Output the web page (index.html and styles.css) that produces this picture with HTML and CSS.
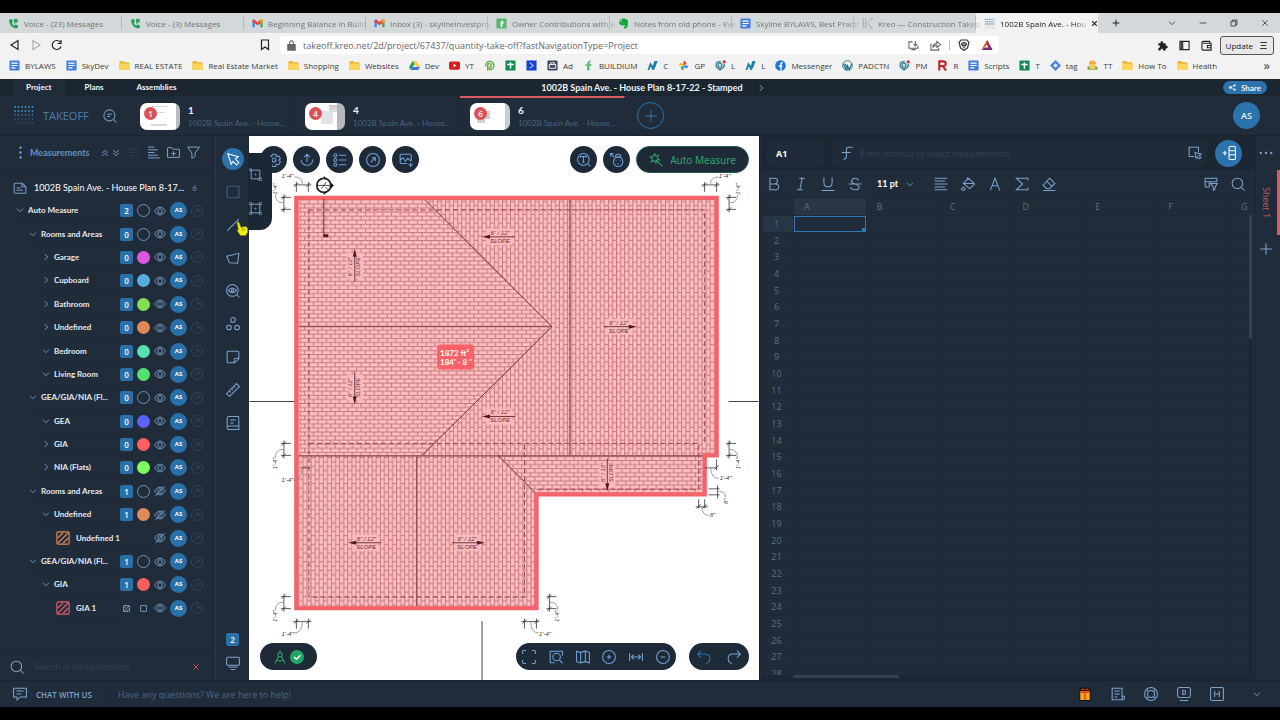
FILE: index.html
```html
<!doctype html>
<html lang="en">

<head>
	<meta charset="utf-8">
	<title>1002B Spain Ave. - House Plan</title>
	<link rel="stylesheet" href="styles.css">
</head>

<body>
	<!-- icon set -->
	<svg class="defs" aria-hidden="true">
		<symbol id="phone" viewBox="0 0 24 24"><path d="M3 3l5-1 3 6-3 3c1 3 3 5 6 6l3-3 5 3-1 5c-10 2-20-8-18-19z" fill="#17a05a" stroke="none"/><path d="M13 2h8v8h-8z" fill="#2f9b57" stroke="none"/><path d="M14 11l-2 4 6-5z" fill="#2f9b57" stroke="none"/></symbol>
		<symbol id="gmail" viewBox="0 0 24 24"><path d="M1 5v15h5V9z" fill="#4285f4" stroke="none"/><path d="M23 5v15h-5V9z" fill="#34a853" stroke="none"/><path d="M1 4l4-1 7 6 7-6 4 1v4l-11 8L1 8z" fill="#ea4335" stroke="none"/><path d="M18 6l5-3v5l-5 4z" fill="#fbbc04" stroke="none"/></symbol>
		<symbol id="buildiumsq" viewBox="0 0 24 24"><rect x="1" y="1" width="22" height="22" rx="2" fill="#5bb56d" stroke="none"/><path d="M17 5c-5 0-7 2-7 6v9h4v-8c3 0 4-1 4-3h-4c0-2 1-3 3-4z" fill="#fff" stroke="none"/></symbol>
		<symbol id="buildium" viewBox="0 0 24 24"><path d="M19 1c-7 0-10 3-10 9v13h5V13c4 0 5-2 5-4h-5c0-4 1-6 5-8zM4 9h4v4H6z" fill="#5bb56d" stroke="none"/></symbol>
		<symbol id="evernote" viewBox="0 0 24 24"><path d="M8 2c5-2 11 0 13 3 2 5 1 12-2 17-3 2-7 1-6-2 0-2 3-2 4-2-1-2-4-1-5-2-5 1-10-2-10-8h6z" fill="#14a83b" stroke="none"/><path d="M2 7l5-5v5z" fill="#14a83b" stroke="none"/></symbol>
		<symbol id="doc" viewBox="0 0 24 24"><rect x="1" y="1" width="22" height="22" rx="2" fill="#3f7de0" stroke="none"/><path d="M5 7h14M5 12h14M5 17h9" stroke="#fff" stroke-width="2.6"/></symbol>
		<symbol id="kreo" viewBox="0 0 24 24"><path d="M3 1v22M8 1v22" stroke="#d9808c" stroke-width="3" stroke-dasharray="3 2"/><path d="M13 9h3M13 14h3M17 4h3M17 19h3M20 1h3M20 22h3" stroke="#97a5b4" stroke-width="3"/></symbol>
		<symbol id="dots" viewBox="0 0 24 24"><path d="M2 3h21M2 8h21M2 13h21" stroke="#7fa7cc" stroke-width="3" stroke-dasharray="3 1"/><path d="M2 18h21M2 22h21" stroke="#b4c9dc" stroke-width="2" stroke-dasharray="2 2"/></symbol>
		<symbol id="folder" viewBox="0 0 24 24"><path d="M1 4q0-2 2-2h7l2 3h9q2 0 2 2v13q0 2-2 2H3q-2 0-2-2z" fill="#e9b93a" stroke="none"/><path d="M1 8h22v12q0 2-2 2H3q-2 0-2-2z" fill="#fbd55c" stroke="none"/></symbol>
		<symbol id="drive" viewBox="0 0 24 24"><path d="M8 2h8L8 16l-4 6-4-7z" fill="#1ea362" stroke="none"/><path d="M8 2h8l8 13h-8z" fill="#ffcf48" stroke="none"/><path d="M8 15h16l-4 7H4z" fill="#3b78e7" stroke="none"/></symbol>
		<symbol id="youtube" viewBox="0 0 24 24"><rect x="0" y="3" width="24" height="18" rx="4" fill="#d91e1e" stroke="none"/><path d="M10 8l6 4-6 4z" fill="#fff" stroke="none"/></symbol>
		<symbol id="pgreen" viewBox="0 0 24 24"><path d="M4 14a9 9 0 1 1 8 7v-5a4 4 0 1 0-4-5v12" stroke="#62a93a" stroke-width="3"/></symbol>
		<symbol id="gsheet" viewBox="0 0 24 24"><rect x="1" y="1" width="22" height="22" rx="1" fill="#118a50" stroke="none"/><path d="M5 10h14M12 5v14" stroke="#fff" stroke-width="3.4"/></symbol>
		<symbol id="bluesq" viewBox="0 0 24 24"><path d="M1 1h22v22H1z" fill="#1443d8" stroke="none"/><path d="M8 6l8 6-8 6" stroke="#fff" stroke-width="2"/></symbol>
		<symbol id="lockbox" viewBox="0 0 24 24"><rect x="1" y="1" width="22" height="22" rx="3" fill="#3b4554" stroke="none"/><path d="M5 10h14v8H5zM8 10V6h8v4" stroke="#fff" stroke-width="2"/></symbol>
		<symbol id="nblue" viewBox="0 0 24 24"><path d="M1 22L7 5l6 8 3 9h-4L8 14l-3 8zM12 16l4-14h7l-6 17z" fill="#1b80a8" stroke="none"/></symbol>
		<symbol id="pinwheel" viewBox="0 0 24 24"><path d="M12 12V1q6 2 6 6t-6 5z" fill="#ea4335" stroke="none"/><path d="M12 12h11q-2 6-6 6t-5-6z" fill="#4285f4" stroke="none"/><path d="M12 12v11q-6-2-6-6t6-5z" fill="#34a853" stroke="none"/><path d="M12 12H1q2-6 6-6t5 6z" fill="#fbbc04" stroke="none"/></symbol>
		<symbol id="pin" viewBox="0 0 24 24"><path d="M13 4C2 2-3 13 11 22c8-6 11-9 9-14M15 9c-8-4-12 2-4 8 4-2 5-4 4-8z" stroke="#26788a" stroke-width="2.6"/><circle cx="20" cy="4" r="3.600" fill="#d8343a" stroke="none"/></symbol>
		<symbol id="facebook" viewBox="0 0 24 24"><circle cx="12" cy="12" r="11.5" fill="#1877d8" stroke="none"/><path d="M17 6h-2q-2 0-2 3v14M8 13h8" stroke="#fff" stroke-width="3"/></symbol>
		<symbol id="wordpress" viewBox="0 0 24 24"><circle cx="12" cy="12" r="10.5" stroke="#2c6f90" stroke-width="2"/><path d="M3 8l6 13 3-9 4 9 5-13M7 8l5 13" stroke="#2c6f90" stroke-width="2.6"/></symbol>
		<symbol id="redr" viewBox="0 0 24 24"><path d="M5 23V3h8q6 0 6 5t-6 5H7M12 13l8 10" stroke="#c0202c" stroke-width="4.4"/></symbol>
		<symbol id="tagblue" viewBox="0 0 24 24"><path d="M12 0l12 12-12 12L0 12z" fill="#4a82e0" stroke="none"/><path d="M12 7l5 5-5 5-5-5z" fill="#e7effc" stroke="none"/></symbol>
		<symbol id="ttface" viewBox="0 0 24 24"><path d="M4 10q0-9 8-9t8 9z" fill="#f1b13c" stroke="none"/><path d="M1 15q11-7 22 0v6H1z" fill="#69b045" stroke="none"/><path d="M6 9h12v11H6z" fill="#f6cb63" stroke="none"/></symbol>

		<symbol id="x" viewBox="0 0 24 24"><path d="M4 4l16 16M20 4L4 20"/></symbol>
		<symbol id="plus" viewBox="0 0 24 24"><path d="M12 2v20M2 12h20"/></symbol>
		<symbol id="down" viewBox="0 0 24 24"><path d="M3 8l9 9 9-9"/></symbol>
		<symbol id="right" viewBox="0 0 24 24"><path d="M8 3l9 9-9 9"/></symbol>
		<symbol id="minus" viewBox="0 0 24 24"><path d="M2 12h20"/></symbol>
		<symbol id="restore" viewBox="0 0 24 24"><path d="M3 7h14v14H3zM7 7V3h14v14h-4"/></symbol>
		<symbol id="back" viewBox="0 0 24 24"><path d="M18 3v18L4 12z"/></symbol>
		<symbol id="fwd" viewBox="0 0 24 24"><path d="M6 3v18l14-9z"/></symbol>
		<symbol id="reload" viewBox="0 0 24 24"><path d="M20 15a9 9 0 1 1-1-8M20 2v7h-7"/></symbol>
		<symbol id="bookmark" viewBox="0 0 24 24"><path d="M5 2h14v19l-7-5-7 5z"/></symbol>
		<symbol id="lock" viewBox="0 0 24 24"><path d="M4 10h16v12H4z" fill="currentColor"/><path d="M8 10V6q0-4 4-4t4 4v4"/></symbol>
		<symbol id="install" viewBox="0 0 24 24"><path d="M10 4H2v14h20v-5M7 21h10M16 2v11M12 9l4 4 4-4"/></symbol>
		<symbol id="share" viewBox="0 0 24 24"><path d="M4 10H2v12h17v-5M6 16c1-6 5-8 9-8V3l8 7-8 6v-4c-4 0-7 1-9 4z"/></symbol>
		<symbol id="brave" viewBox="0 0 24 24"><path d="M6 2h12l4 5-3 11-7 5-7-5L2 7z" fill="#f6f6f6" stroke="#333"/><path d="M7 7l5-1 5 1 1 4-3 4-3 5-3-5-3-4z" fill="#444" stroke="none"/><path d="M9 9l3 2 3-2M10 15l2 1 2-1" stroke="#f6f6f6" stroke-width="1.500"/></symbol>
		<symbol id="bat" viewBox="0 0 24 24"><path d="M12 2l11 20H1l6-5h8l-3-6z" fill="#722c89" stroke="none"/><path d="M12 2L1 22l6-5 5-6z" fill="#e0512c" stroke="none"/><path d="M12 2l11 20-8-5-3-6z" fill="#a02a5a" stroke="none"/></symbol>
		<symbol id="puzzle" viewBox="0 0 24 24"><path d="M3 7h5c-2-6 7-6 5 0h6v5c6-1 6 8 0 6v5h-6c1-5-6-5-5 0H3v-6c5 1 5-6 0-5z" fill="currentColor" stroke="none"/></symbol>
		<symbol id="panel" viewBox="0 0 24 24"><path d="M2 3h20v18H2zM5 3v18M8 3v18"/></symbol>
		<symbol id="wallet" viewBox="0 0 24 24"><path d="M2 5q0-2 3-2h14v4M2 5v14q0 3 3 3h17V7H4M22 12h-8v5h8"/></symbol>
		<symbol id="menu" viewBox="0 0 24 24"><path d="M3 4h18M5 12h14M3 20h18"/></symbol>

		<symbol id="sharenodes" viewBox="0 0 24 24"><path d="M6 12l12-7M6 12l12 7"/><circle cx="5" cy="12" r="4" fill="currentColor"/><circle cx="19" cy="5" r="3" fill="currentColor"/><circle cx="19" cy="19" r="3" fill="currentColor"/></symbol>
		<symbol id="textsearch" viewBox="0 0 24 24"><circle cx="11" cy="11" r="9.5"/><path d="M18 18l5 5M7 9h8M7 13h5"/></symbol>
		<symbol id="search" viewBox="0 0 24 24"><circle cx="11" cy="11" r="9"/><path d="M18 18l5 5"/></symbol>
		<symbol id="more" viewBox="0 0 24 24"><g fill="currentColor" stroke="none"><circle cx="12" cy="3" r="2.2"/><circle cx="12" cy="12" r="2.2"/><circle cx="12" cy="21" r="2.2"/></g></symbol>
		<symbol id="morex" viewBox="0 0 24 24"><g fill="currentColor" stroke="none"><circle cx="3" cy="12" r="2"/><circle cx="12" cy="12" r="2"/><circle cx="21" cy="12" r="2"/></g></symbol>
		<symbol id="dblup" viewBox="0 0 24 24"><path d="M3 12l9-8 9 8M3 21l9-8 9 8"/></symbol>
		<symbol id="dbldown" viewBox="0 0 24 24"><path d="M3 3l9 8 9-8M3 12l9 8 9-8"/></symbol>
		<symbol id="listr" viewBox="0 0 24 24"><path d="M20 2v20M4 6h12M4 12h12M4 18h12"/></symbol>
		<symbol id="listl" viewBox="0 0 24 24"><path d="M2 2h12M2 7h18M2 12h12M2 17h18M2 22h22"/></symbol>
		<symbol id="newfolder" viewBox="0 0 24 24"><path d="M1 4q0-1 1-1h7l2 3h11q1 0 1 1v14H1zM12 10v8M8 14h8"/></symbol>
		<symbol id="filter" viewBox="0 0 24 24"><path d="M1 2h22l-8 11v6l-6 4V13z"/></symbol>
		<symbol id="page" viewBox="0 0 24 24"><path d="M4 4h12l6 6v11H4q-2 0-2-2V6q0-2 2-2zM15 4v6h7M6 12h7M6 16h11"/></symbol>
		<symbol id="eye" viewBox="0 0 24 24"><path d="M1 12q11-16 22 0-11 16-22 0z"/><circle cx="12" cy="12" r="4.5"/></symbol>
		<symbol id="eyeoff" viewBox="0 0 24 24"><path d="M1 12q11-16 22 0-11 16-22 0zM3 22L21 2"/><circle cx="12" cy="12" r="4.5"/></symbol>
		<symbol id="link" viewBox="0 0 24 24"><circle cx="12" cy="12" r="11"/><path d="M8 16l8-8M10 8h6v6"/></symbol>
		<symbol id="hatch" viewBox="0 0 24 24"><rect x="1.5" y="1.5" width="21" height="21" rx="2"/><path d="M3 12l9-9M3 21L21 3M12 21l9-9"/></symbol>
		<symbol id="square" viewBox="0 0 24 24"><rect x="2" y="2" width="20" height="20" rx="1"/></symbol>

		<symbol id="cursor" viewBox="0 0 24 24"><path d="M3 3l18 5-5 4 6 6-4 4-6-6-3 5z"/></symbol>
		<symbol id="line" viewBox="0 0 24 24"><path d="M2 22L22 2"/></symbol>
		<symbol id="poly" viewBox="0 0 24 24"><path d="M1 9l21-5-2 17-14-1z"/></symbol>
		<symbol id="eyesearch" viewBox="0 0 24 24"><circle cx="11" cy="11" r="10"/><path d="M18 18l5 5M4 11q7-8 14 0-7 8-14 0z"/><circle cx="11" cy="11" r="2"/></symbol>
		<symbol id="three" viewBox="0 0 24 24"><circle cx="12" cy="5" r="4"/><circle cx="5" cy="18" r="4"/><circle cx="19" cy="18" r="4"/></symbol>
		<symbol id="sticky" viewBox="0 0 24 24"><path d="M4 2h16q2 0 2 2v11l-7 7H4q-2 0-2-2V4q0-2 2-2zM22 14h-5q-3 0-3 3v5"/></symbol>
		<symbol id="ruler" viewBox="0 0 24 24"><path d="M1 18L18 1l5 5L6 23zM6 14l2 2M10 10l2 2M14 6l2 2"/></symbol>
		<symbol id="book" viewBox="0 0 24 24"><path d="M4 1h17q1 0 1 1v15H4q-2 1-2 3t2 3h18v-6M2 20V4q0-3 2-3M7 7h10M7 12h6"/></symbol>
		<symbol id="screens" viewBox="0 0 24 24"><rect x="1" y="2" width="22" height="14" rx="2"/><path d="M4 19h16M8 23h8"/></symbol>
		<symbol id="boxnode" viewBox="0 0 24 24"><path d="M4 4h16v16H4z"/><circle cx="3" cy="3" r="2"/><circle cx="21" cy="21" r="2.6"/><circle cx="12" cy="12" r="1"/></symbol>
		<symbol id="boxnodes" viewBox="0 0 24 24"><path d="M4 4h16v16H4z"/><circle cx="3" cy="3" r="2.4"/><circle cx="21" cy="3" r="2.4"/><circle cx="3" cy="21" r="2.4"/><circle cx="21" cy="21" r="2.4"/><circle cx="12" cy="12" r="1"/></symbol>

		<symbol id="gear" viewBox="0 0 24 24"><path d="M9 2h6l1 4 4-1 3 5-3 2 3 3-3 5-4-1-1 4H9l-1-4-4 1-3-5 3-3-3-2 3-5 4 1z"/><circle cx="12" cy="12" r="3.4"/></symbol>
		<symbol id="export" viewBox="0 0 24 24"><path d="M12 16V2M7 7l5-5 5 5M2 11a10 10 0 0 0 20 0"/></symbol>
		<symbol id="legend" viewBox="0 0 24 24"><circle cx="4" cy="4" r="2.6"/><circle cx="4" cy="12" r="2.6"/><circle cx="4" cy="20" r="2.6"/><path d="M10 4h13M10 12h13M10 20h13"/></symbol>
		<symbol id="image" viewBox="0 0 24 24"><path d="M14 18H4q-2 0-2-2V4q0-2 2-2h15q2 0 2 2v9M2 12l5-4 4 6 4-5 6 5M20 17v7M16 20h8"/></symbol>
		<symbol id="tsearch" viewBox="0 0 24 24"><circle cx="11" cy="11" r="10"/><path d="M18 18l5 5M6 8V6h10v2M11 6v10M9 16h4"/></symbol>
		<symbol id="bug" viewBox="0 0 24 24"><circle cx="14" cy="15" r="8"/><path d="M10 8q-2-6 4-6t4 6M10 7h8M1 1l6 6M1 6V1h5M10 13l1 1M17 13l1 1M13 18l1 1 1-1"/></symbol>
		<symbol id="wand" viewBox="0 0 24 24"><path d="M10 1l1 4 5-1-2 4 4 4-5 0-1 5-3-4-5 2 2-5-4-3 5-1zM14 14l9 9"/></symbol>
		<symbol id="compass" viewBox="0 0 24 24"><circle cx="12" cy="8" r="3.6"/><path d="M12 1v3M10 11L3 23M14 11l7 12M6 17q6 4 12 0"/></symbol>
		<symbol id="okdot" viewBox="0 0 24 24"><circle cx="12" cy="12" r="12" fill="#23a565" stroke="none"/><path d="M7 12l4 4 7-7" stroke="#fff" stroke-width="2.4"/></symbol>
		<symbol id="full" viewBox="0 0 24 24"><path d="M1 7V3q0-2 2-2h4M17 1h4q2 0 2 2v4M23 17v4q0 2-2 2h-4M7 23H3q-2 0-2-2v-4"/></symbol>
		<symbol id="zoomarea" viewBox="0 0 24 24"><path d="M23 10V2H2v20h8"/><circle cx="13" cy="12" r="6.5"/><path d="M18 17l5 6"/></symbol>
		<symbol id="map" viewBox="0 0 24 24"><path d="M1 2l7 2 8-2 7 2v18l-7-2-8 2-7-2zM8 4v18M16 2v18"/></symbol>
		<symbol id="circplus" viewBox="0 0 24 24"><circle cx="12" cy="12" r="11"/><path d="M12 8v8M8 12h8"/></symbol>
		<symbol id="circminus" viewBox="0 0 24 24"><circle cx="12" cy="12" r="11"/><path d="M8 12h8"/></symbol>
		<symbol id="fitw" viewBox="0 0 24 24"><path d="M1 5v14M23 5v14M5 12h14M8 8l-4 4 4 4M16 8l4 4-4 4"/></symbol>
		<symbol id="undo" viewBox="0 0 24 24"><path d="M7 1L1 7l6 6M1 7h14q7 1 7 8t-7 8"/></symbol>
		<symbol id="redo" viewBox="0 0 24 24"><path d="M17 1l6 6-6 6M23 7H9q-7 1-7 8t7 8"/></symbol>

		<symbol id="func" viewBox="0 0 24 24"><path d="M22 2h-7q-4 0-4 4v12q0 4-5 5M3 11h15"/></symbol>
		<symbol id="pick" viewBox="0 0 24 24"><path d="M11 18H2V2h16v8M12 11l11 3-4 2 3 4-3 2-3-3-2 2z"/></symbol>
		<symbol id="insert" viewBox="0 0 24 24"><rect x="12" y="1" width="11" height="22" rx="2"/><path d="M12 8h11M12 15h11M1 12h7M5 8v8"/></symbol>
		<symbol id="bold" viewBox="0 0 24 24"><path d="M5 2h8q5 0 5 5t-5 5H5zM5 12h9q6 0 6 5t-6 5H5z"/></symbol>
		<symbol id="italic" viewBox="0 0 24 24"><path d="M9 2h10M5 22h10M14 2l-4 20"/></symbol>
		<symbol id="under" viewBox="0 0 24 24"><path d="M5 1v9q0 7 7 7t7-7V1M1 23h22"/></symbol>
		<symbol id="strike" viewBox="0 0 24 24"><path d="M18 6q-1-4-6-4T6 7q0 3 6 5 7 2 7 6t-7 4-7-5M1 12h22"/></symbol>
		<symbol id="align" viewBox="0 0 24 24"><path d="M1 2h22M1 7h18M1 12h22M1 17h18M1 22h22"/></symbol>
		<symbol id="bucket" viewBox="0 0 24 24"><path d="M13 2l10 10-8 8-11-9 9-9M4 11h17M10 1l3 4"/><path d="M1 21q3-7 6 0-3 4-6 0z"/></symbol>
		<symbol id="textcol" viewBox="0 0 24 24"><path d="M4 23l8-21 8 21M7 15h10"/></symbol>
		<symbol id="sum" viewBox="0 0 24 24"><path d="M22 6V2H2l11 10L2 22h20v-4"/></symbol>
		<symbol id="erase" viewBox="0 0 24 24"><path d="M13 2l9 9-9 9H8l-6-6zM8 7l9 9M2 23h21"/></symbol>
		<symbol id="tfilter" viewBox="0 0 24 24"><path d="M10 17H2V2h20v6M2 8h20M9 8v9M11 11h12l-4 6v4l-3 2v-6z"/></symbol>

		<symbol id="chat" viewBox="0 0 24 24"><path d="M1 2h22v15H13l-6 5v-5H1zM6 7h12M6 12h8"/></symbol>
		<symbol id="gift" viewBox="0 0 24 24"><path d="M4 4l5-3 3 3 3-3 5 3v5H4z" fill="#d63a1c" stroke="#180d05"/><path d="M3 6h18v17H3z" fill="#f5a91c" stroke="#180d05"/><path d="M12 6v16M4 9h16" stroke="#d63a1c" stroke-width="2.4"/></symbol>
		<symbol id="news" viewBox="0 0 24 24"><path d="M19 16V2H2v20h18q3 0 3-3v-3h-4v6M6 7h9M6 12h9M6 17h5"/></symbol>
		<symbol id="ring" viewBox="0 0 24 24"><circle cx="12" cy="12" r="11"/><circle cx="12" cy="12" r="6"/><path d="M4 4l4 4M20 4l-4 4M4 20l4-4M20 20l-4-4"/></symbol>
		<symbol id="video" viewBox="0 0 24 24"><rect x="1" y="1" width="22" height="17" rx="3"/><path d="M5 23h14M10 6h2q3 0 3 3.500t-3 3.500h-2z"/></symbol>
		<symbol id="hbox" viewBox="0 0 24 24"><rect x="1" y="1" width="22" height="22" rx="2"/><path d="M8 7v10M16 7v10M8 12h8"/></symbol>
	</svg>

	<div class="screen">
		<header class="browser">
			<div class="tabstrip">
				<div class="tab"><svg><use href="#phone"/></svg><span>Voice - (23) Messages</span></div>
				<div class="tab"><svg><use href="#phone"/></svg><span>Voice - (3) Messages</span></div>
				<div class="tab"><svg><use href="#gmail"/></svg><span>Beginning Balance in Build</span></div>
				<div class="tab"><svg><use href="#gmail"/></svg><span>Inbox (3) - skylineinvestpro</span></div>
				<div class="tab"><svg><use href="#buildiumsq"/></svg><span>Owner Contributions with e</span></div>
				<div class="tab"><svg><use href="#evernote"/></svg><span>Notes from old phone - Eve</span></div>
				<div class="tab"><svg><use href="#doc"/></svg><span>Skyline BYLAWS, Best Practi</span></div>
				<div class="tab"><svg><use href="#kreo"/></svg><span>Kreo — Construction Takeo</span></div>
				<div class="tab active"><svg><use href="#dots"/></svg><span>1002B Spain Ave. - Hou</span><button aria-label="Close tab"><svg><use href="#x"/></svg></button></div>
				<button class="newtab" aria-label="New tab"><svg><use href="#plus"/></svg></button>
				<div class="winbuttons">
					<button aria-label="Search tabs"><svg><use href="#down"/></svg></button>
					<button aria-label="Minimize"><svg><use href="#minus"/></svg></button>
					<button aria-label="Restore"><svg><use href="#restore"/></svg></button>
					<button aria-label="Close"><svg><use href="#x"/></svg></button>
				</div>
			</div>
			<div class="navbar">
				<button aria-label="Back"><svg><use href="#back"/></svg></button>
				<button aria-label="Forward" class="off"><svg><use href="#fwd"/></svg></button>
				<button aria-label="Reload"><svg><use href="#reload"/></svg></button>
				<button aria-label="Bookmark" class="mark"><svg><use href="#bookmark"/></svg></button>
				<div class="urlbox">
					<svg><use href="#lock"/></svg>
					<input type="text" aria-label="Address" value="takeoff.kreo.net/2d/project/67437/quantity-take-off?fastNavigationType=Project">
					<svg><use href="#install"/></svg>
					<svg><use href="#share"/></svg>
					<i></i>
					<svg class="big"><use href="#brave"/></svg>
					<svg class="big"><use href="#bat"/></svg>
				</div>
				<div class="navright">
					<button aria-label="Extensions"><svg><use href="#puzzle"/></svg></button>
					<button aria-label="Sidebar"><svg><use href="#panel"/></svg></button>
					<button aria-label="Wallet"><svg><use href="#wallet"/></svg></button>
					<button class="update">Update <svg><use href="#menu"/></svg></button>
				</div>
			</div>
			<nav class="bookmarks">
				<a href="#"><svg><use href="#doc"/></svg>BYLAWS</a>
				<a href="#"><svg><use href="#doc"/></svg>SkyDev</a>
				<a href="#"><svg><use href="#folder"/></svg>REAL ESTATE</a>
				<a href="#"><svg><use href="#folder"/></svg>Real Estate Market</a>
				<a href="#"><svg><use href="#folder"/></svg>Shopping</a>
				<a href="#"><svg><use href="#folder"/></svg>Websites</a>
				<a href="#"><svg><use href="#drive"/></svg>Dev</a>
				<a href="#"><svg><use href="#youtube"/></svg>YT</a>
				<a href="#" aria-label="P"><svg><use href="#pgreen"/></svg></a>
				<a href="#" aria-label="Sheets"><svg><use href="#gsheet"/></svg></a>
				<a href="#" aria-label="Campaigns"><svg><use href="#bluesq"/></svg></a>
				<a href="#"><svg><use href="#lockbox"/></svg>Ad</a>
				<a href="#"><svg><use href="#buildium"/></svg>BUILDIUM</a>
				<a href="#"><svg><use href="#nblue"/></svg>C</a>
				<a href="#"><svg><use href="#pinwheel"/></svg>GP</a>
				<a href="#"><svg><use href="#pin"/></svg>L</a>
				<a href="#"><svg><use href="#nblue"/></svg>L</a>
				<a href="#"><svg><use href="#facebook"/></svg>Messenger</a>
				<a href="#"><svg><use href="#wordpress"/></svg>PADCTN</a>
				<a href="#"><svg><use href="#pin"/></svg>PM</a>
				<a href="#"><svg><use href="#redr"/></svg>R</a>
				<a href="#"><svg><use href="#doc"/></svg>Scripts</a>
				<a href="#"><svg><use href="#gsheet"/></svg>T</a>
				<a href="#"><svg><use href="#tagblue"/></svg>tag</a>
				<a href="#"><svg><use href="#ttface"/></svg>TT</a>
				<a href="#"><svg><use href="#folder"/></svg>How To</a>
				<a href="#"><svg><use href="#folder"/></svg>Health</a>
				<button aria-label="More bookmarks">»</button>
			</nav>
		</header>

		<div class="menubar">
			<nav>
				<a href="#" class="current">Project</a>
				<a href="#">Plans</a>
				<a href="#">Assemblies</a>
			</nav>
			<h1>1002B Spain Ave. - House Plan 8-17-22 - Stamped <button aria-label="Next"><svg><use href="#right"/></svg></button></h1>
			<div class="menuend"><button class="share"><svg><use href="#sharenodes"/></svg>Share</button></div>
		</div>

		<div class="pages">
			<div class="brand">
				<svg class="logo" viewBox="0 0 20 20"><g stroke="#3f8cc6" stroke-linecap="round"><path d="M1 1h19" stroke-width="2" stroke-dasharray="0 3.500"/><path d="M1 5h19" stroke-width="1.800" stroke-dasharray="0 3.500"/><path d="M1 9h19" stroke-width="1.500" stroke-dasharray="0 3.500"/><path d="M1 13h19" stroke-width="1.200" stroke-dasharray="0 3.500"/><path d="M4.500 17h15" stroke-width="1" stroke-dasharray="0 3.500"/></g></svg>
				<span>TAKEOFF</span>
				<button aria-label="Find"><svg><use href="#textsearch"/></svg></button>
			</div>
			<a href="#" class="page"><i class="thumb t1"><b>1</b></i><span><strong>1</strong><small>1002B Spain Ave. - House...</small></span></a>
			<a href="#" class="page"><i class="thumb t4"><b>4</b></i><span><strong>4</strong><small>1002B Spain Ave. - House...</small></span></a>
			<a href="#" class="page open"><i class="thumb t6"><b>6</b></i><span><strong>6</strong><small>1002B Spain Ave. - House...</small></span></a>
			<button class="addpage" aria-label="Add page"><svg><use href="#plus"/></svg></button>
			<button class="avatar">AS</button>
		</div>

		<main>
			<aside class="measures">
				<div class="mhead">
					<svg><use href="#more"/></svg>
					<h2>Measurements</h2>
					<button aria-label="Collapse all"><svg class="sm"><use href="#dblup"/></svg></button>
					<button aria-label="Expand all"><svg class="sm"><use href="#dbldown"/></svg></button>
					<button aria-label="Align right" class="off"><svg><use href="#listr"/></svg></button>
					<button aria-label="Sort"><svg><use href="#listl"/></svg></button>
					<button aria-label="New folder"><svg><use href="#newfolder"/></svg></button>
					<button aria-label="Filter"><svg><use href="#filter"/></svg></button>
				</div>
				<div class="plan"><svg><use href="#page"/></svg><span>1002B Spain Ave. - House Plan 8-17...</span><em>6</em></div>
				<ul id="tree"></ul>
				<form class="msearch">
					<label for="q" aria-label="Search"><svg><use href="#search"/></svg></label>
					<input id="q" type="text" placeholder="Search in measurements">
					<button type="reset" aria-label="Clear"><svg><use href="#x"/></svg></button>
				</form>
			</aside>

			<div class="rail">
				<button class="on" aria-label="Select"><svg><use href="#cursor"/></svg></button>
				<button class="dim" aria-label="Rectangle"><svg><use href="#square"/></svg></button>
				<button aria-label="Line"><svg><use href="#line"/></svg></button>
				<button aria-label="Polygon"><svg><use href="#poly"/></svg></button>
				<button aria-label="Find similar"><svg><use href="#eyesearch"/></svg></button>
				<button aria-label="Count"><svg><use href="#three"/></svg></button>
				<button aria-label="Note"><svg><use href="#sticky"/></svg></button>
				<button aria-label="Ruler"><svg><use href="#ruler"/></svg></button>
				<button aria-label="Guide"><svg><use href="#book"/></svg></button>
				<span class="count">2</span>
				<button class="last" aria-label="Views"><svg><use href="#screens"/></svg></button>
				<div class="flyout">
					<button aria-label="Two point rectangle"><svg><use href="#boxnode"/></svg></button>
					<button aria-label="Four point rectangle"><svg><use href="#boxnodes"/></svg></button>
				</div>
				<svg class="hand" viewBox="0 0 24 30"><path d="M2 3q2-3 4 0l4 10 8-2q4 0 5 4v8l-4 6H9l-6-9q-2-4 2-2z" fill="#f4f000" stroke="#8c8a10" stroke-width="1"/><path d="M12 15l1 5M16 14l1 5" stroke="#8c8a10"/></svg>
			</div>

			<section class="canvas">
				<svg class="drawing" viewBox="249 136 510 545" preserveAspectRatio="xMidYMid meet">
					<defs>
						<pattern id="rows" patternUnits="userSpaceOnUse" x="298" y="199.500" width="8.700" height="8.160">
							<path d="M0 .5h8.700M0 4.580h8.700M2 .5v4.080M6.350 4.580v4.080" stroke="#b0646a" stroke-width=".75"/>
						</pattern>
						<pattern id="cols" patternUnits="userSpaceOnUse" x="298" y="199.500" width="8.160" height="8.700">
							<path d="M.5 0v8.700M4.580 0v8.700M.5 2h4.080M4.580 6.350h4.080" stroke="#b0646a" stroke-width=".75"/>
						</pattern>
						<g id="dimh"><path d="M0-3v10M12-3v10M-3 0h18M-2 2l4-4M10 2l4-4"/></g>
						<g id="dimv"><path d="M-3 0h10M-3 12h10M0-3v18M-2 2l4-4M-2 14l4-4"/></g>
						<g id="slope">
							<path d="M-13-8h26v16h-26z" fill="#fbb9bb"/>
							<path d="M-16 0h26" stroke="#4a1a20" stroke-width=".8"/>
							<path d="M9-2l8 2-8 2z" fill="#4a1a20"/>
						</g>
					</defs>
					<path class="sheetline" d="M249 402h46M729 402h30M482 622v60"/>
					<path d="M296 198h421v258h-12v39H536.500v114H296z" fill="#ffbdbf"/>
					<path d="M298 199.500h126l128 127.500-130 129H298z" fill="url(#rows)"/>
					<path d="M498 456h205v37H536z" fill="url(#rows)"/>
					<path d="M424 199.500h291V456H422l130-129zM298 456h200l38 38v113H298z" fill="url(#cols)"/>
					<path class="edge" d="M424 199l128 128-130 129M498 456l39 39M298 456.500h407"/>
					<path class="ridge" d="M570 199v257M416.500 456v152M298 327h253"/>
					<path class="dash" d="M308.500 210H705V444M308.500 210V598H524.500V444M308.500 444H699V490H536"/>
					<path d="M296 198h421v258h-12v39H536.500v114H296z" fill="none" stroke="#f4626a" stroke-width="4.400"/>

					<g class="mark">
						<path d="M323.500 199v37" stroke="#3a1418" stroke-width=".8"/>
						<path d="M323 234.500h5v3h-5z" fill="#4a1a20"/>
						<path d="M323.500 176l10 9.500-10 9.500z" fill="#000"/>
						<circle cx="323.500" cy="185.500" r="7" fill="#fff" stroke="#222"/>
						<path d="M316.500 185.500h14M321 189l5-7M325 187l3 3" stroke="#222" stroke-width=".8"/>
					</g>

					<g class="slopes">
						<use href="#slope" transform="translate(499 237) rotate(180)"/>
						<use href="#slope" transform="translate(620 327)"/>
						<use href="#slope" transform="translate(354.500 266) rotate(-90)"/>
						<use href="#slope" transform="translate(354.500 388) rotate(90)"/>
						<use href="#slope" transform="translate(499 417) rotate(180)"/>
						<use href="#slope" transform="translate(607.500 475) rotate(90)"/>
						<use href="#slope" transform="translate(365 543.500) rotate(180)"/>
						<use href="#slope" transform="translate(468 543.500)"/>
						<text x="500" y="235">6" / 12"</text><text x="500" y="243">SLOPE</text>
						<text x="619" y="325">6" / 12"</text><text x="619" y="333">SLOPE</text>
						<text x="500" y="415">6" / 12"</text><text x="500" y="423">SLOPE</text>
						<text x="366" y="542">6" / 12"</text><text x="366" y="550">SLOPE</text>
						<text x="467" y="542">6" / 12"</text><text x="467" y="550">SLOPE</text>
						<text transform="translate(352 267) rotate(-90)">6" / 12"</text><text transform="translate(360 267) rotate(-90)">SLOPE</text>
						<text transform="translate(352 388) rotate(-90)">6" / 12"</text><text transform="translate(360 388) rotate(-90)">SLOPE</text>
						<text transform="translate(605 473) rotate(-90)">6" / 12"</text><text transform="translate(613 473) rotate(-90)">SLOPE</text>
					</g>

					<g class="dims">
						<use href="#dimh" x="296" y="185"/><use href="#dimh" x="705" y="185"/>
						<use href="#dimh" x="296" y="622.500"/><use href="#dimh" x="524.500" y="622.500"/>
						<use href="#dimv" x="283.500" y="197.500"/><use href="#dimv" x="729.500" y="197.500"/>
						<use href="#dimv" x="283.500" y="444"/><use href="#dimv" x="729.500" y="444"/>
						<use href="#dimv" x="283.500" y="597.500"/><use href="#dimv" x="549.500" y="597.500"/>
						<path d="M705 468.500h12M717 460v11M715 470l4-4M709 489.500h11M709 495.500h11M718 486v13M699 500v9M705 500v9M696 507.500h12M697 509l4-4M703 509l4-4M300 468.500h10"/>
						<path class="leader" d="M302 184q0-7-8-7M711 184q0-7 8-7M283 203q-8 0-8-8M730 203q8 0 8-8M283 450q-8 0-8 8M730 450q8 0 8 8M283 603q-8 0-8 8M550 603q8 0 8 8M302 623q0 11-9 11M531 623q0 11 8 11M302 470q-2 11-9 11M711 469q1 10 8 10M719 492q7 0 7 6M702 508q1 8 7 8"/>
						<text x="287" y="178">1'-4"</text><text x="725" y="178">1'-4"</text>
						<text x="287" y="483">1'-4"</text><text x="726" y="481">1'-4"</text>
						<text x="287" y="637">1'-4"</text><text x="545" y="637">1'-4"</text>
						<text x="713" y="518">8"</text>
						<text transform="translate(277 189) rotate(-90)">1'-4"</text><text transform="translate(740 189) rotate(-90)">1'-4"</text>
						<text transform="translate(277 464) rotate(-90)">1'-4"</text><text transform="translate(740 464) rotate(-90)">1'-4"</text>
						<text transform="translate(277 617) rotate(-90)">1'-4"</text><text transform="translate(559 617) rotate(-90)">1'-4"</text>
						<text transform="translate(728 502) rotate(-90)">8"</text>
					</g>

					<g class="area">
						<rect x="437" y="345" width="37" height="25" rx="3"/>
						<text x="440" y="356">1872 ft²</text>
						<text x="440" y="365">184' - 8 "</text>
					</g>
				</svg>

				<div class="float top">
					<button class="round" aria-label="Settings"><svg><use href="#gear"/></svg></button>
					<button class="round" aria-label="Export"><svg><use href="#export"/></svg></button>
					<button class="round" aria-label="Legend"><svg><use href="#legend"/></svg></button>
					<button class="round" aria-label="Open"><svg><use href="#link"/></svg></button>
					<button class="round" aria-label="Add image"><svg><use href="#image"/></svg></button>
					<button class="round push" aria-label="Find text"><svg><use href="#tsearch"/></svg></button>
					<button class="round" aria-label="Assistant"><svg><use href="#bug"/></svg></button>
					<button class="auto"><svg><use href="#wand"/></svg>Auto Measure</button>
				</div>
				<div class="float bottom">
					<div class="pill small"><button aria-label="Scale" class="green"><svg><use href="#compass"/></svg></button><svg><use href="#okdot"/></svg></div>
					<div class="pill push">
						<button aria-label="Full screen"><svg><use href="#full"/></svg></button>
						<button aria-label="Zoom to area"><svg><use href="#zoomarea"/></svg></button>
						<button aria-label="Map"><svg><use href="#map"/></svg></button>
						<button aria-label="Zoom in"><svg><use href="#circplus"/></svg></button>
						<button aria-label="Fit width"><svg><use href="#fitw"/></svg></button>
						<button aria-label="Zoom out"><svg><use href="#circminus"/></svg></button>
					</div>
					<div class="pill history">
						<button aria-label="Undo" class="blue"><svg><use href="#undo"/></svg></button>
						<button aria-label="Redo"><svg><use href="#redo"/></svg></button>
					</div>
				</div>
			</section>

			<section class="report">
				<div class="formula">
					<input class="cellname" type="text" aria-label="Cell" value="A1">
					<label class="fx"><svg><use href="#func"/></svg><input type="text" aria-label="Formula" placeholder="Enter formula or select measurements"><svg><use href="#pick"/></svg></label>
					<button class="insert" aria-label="Insert column"><svg><use href="#insert"/></svg></button>
				</div>
				<div class="format">
					<button aria-label="Bold"><svg><use href="#bold"/></svg></button>
					<button aria-label="Italic"><svg><use href="#italic"/></svg></button>
					<button aria-label="Underline"><svg><use href="#under"/></svg></button>
					<button aria-label="Strikethrough"><svg><use href="#strike"/></svg></button>
					<div class="size"><select aria-label="Font size"><option>11 pt</option></select><svg><use href="#down"/></svg></div>
					<button aria-label="Align"><svg><use href="#align"/></svg></button>
					<button aria-label="Fill"><svg><use href="#bucket"/></svg></button>
					<button aria-label="Text color"><svg><use href="#textcol"/></svg></button>
					<button aria-label="Sum"><svg><use href="#sum"/></svg></button>
					<button aria-label="Clear format"><svg><use href="#erase"/></svg></button>
					<button aria-label="Filter table" class="push"><svg><use href="#tfilter"/></svg></button>
					<button aria-label="Search table"><svg><use href="#search"/></svg></button>
				</div>
				<div class="gridwrap">
					<div class="gridclip">
						<table id="grid">
							<colgroup><col class="num"><col span="6"><col class="cut"></colgroup>
							<thead></thead>
							<tbody></tbody>
						</table>
					</div>
					<div class="vbar"><i></i></div>
				</div>
				<div class="hbar"><i></i></div>
			</section>

			<aside class="sheets">
				<button aria-label="More"><svg><use href="#morex"/></svg></button>
				<a href="#">Sheet 1</a>
				<button aria-label="Add sheet"><svg><use href="#plus"/></svg></button>
			</aside>
		</main>

		<footer>
			<a href="#" class="chat"><svg><use href="#chat"/></svg>CHAT WITH US</a>
			<span>Have any questions? We are here to help!</span>
			<button class="push" aria-label="Gifts"><svg><use href="#gift"/></svg></button>
			<button aria-label="News"><svg><use href="#news"/></svg></button>
			<button aria-label="Help"><svg><use href="#ring"/></svg></button>
			<button aria-label="Videos"><svg><use href="#video"/></svg></button>
			<button aria-label="Shortcuts"><svg><use href="#hbox"/></svg></button>
			<button aria-label="Hide" class="hide"><svg><use href="#down"/></svg></button>
		</footer>
	</div>
	<script src="script.js"></script>
</body>

</html>
```

FILE: styles.css
```css
* {
	box-sizing: border-box;
}

body {
	margin: 0;
	padding: 13px 0;
	height: 100vh;
	background: #000;
	font-family: "Open Sans", "Noto Sans", sans-serif;
	font-size: 8px;
	color: #f0f4f8;
	overflow: hidden;
}

svg {
	width: 14px;
	height: 14px;
	flex: none;
	display: block;
	fill: none;
	stroke: currentColor;
	stroke-width: 1.8;
}

.defs {
	position: absolute;
	width: 0;
	height: 0;
}

button {
	display: flex;
	align-items: center;
	justify-content: center;
	margin: 0;
	padding: 0;
	border: 0;
	background: none;
	color: inherit;
	font: inherit;
	cursor: pointer;
}

input,
select {
	min-width: 0;
	padding: 0;
	border: 0;
	outline: 0;
	background: none;
	color: inherit;
	font: inherit;
}

a {
	color: inherit;
	text-decoration: none;
}

h1,
h2,
ul {
	margin: 0;
	padding: 0;
	font-size: inherit;
	font-weight: inherit;
	list-style: none;
}

.push {
	margin-left: auto;
}

.screen {
	display: flex;
	flex-direction: column;
	height: 100%;
	background: #212c3b;
}

/* browser */
.browser {
	background: #f2f2f2;
	color: #3c3c3c;
}

.tabstrip {
	display: flex;
	height: 20px;
	background: #d3d8da;
}

.tab {
	display: flex;
	align-items: center;
	gap: 5px;
	flex: 0 1 122px;
	min-width: 0;
	margin: 3px 0;
	padding: 0 0 0 8px;
	border-right: 1px solid #b6bbbe;
	color: #707578;
}

.tab svg {
	width: 11px;
	height: 11px;
}

.tab span {
	flex: none;
	white-space: nowrap;
	-webkit-mask-image: linear-gradient(90deg, #000 85%, #0004);
	mask-image: linear-gradient(90deg, #000 85%, #0004);
}

.tab:nth-child(-n+2) span {
	-webkit-mask-image: none;
	mask-image: none;
}

.tab.active {
	margin: 0;
	border: 0;
	background: #f2f2f2;
	color: #222;
}

.tab button svg {
	width: 7px;
	height: 7px;
	stroke-width: 4;
}

.newtab {
	width: 28px;
	margin-left: 4px;
	color: #222;
}

.newtab svg {
	width: 8px;
	height: 8px;
	stroke-width: 3;
}

.winbuttons {
	display: flex;
	margin-left: auto;
}

.winbuttons button {
	width: 31px;
}

.winbuttons svg {
	width: 8px;
	height: 8px;
	stroke-width: 2.6;
}

.navbar {
	display: flex;
	align-items: center;
	height: 24px;
	padding: 0 6px 0 9px;
	gap: 9px;
	color: #222;
}

.navbar svg {
	width: 12px;
	height: 12px;
	stroke-width: 2.4;
}

.navbar .off {
	color: #a9a9a9;
}

.navbar .mark {
	margin-left: 187px;
}

.urlbox {
	display: flex;
	align-items: center;
	flex: 1;
	gap: 11px;
	height: 18px;
	padding: 0 6px;
	border-radius: 3px;
	background: #fff;
	color: #666;
}

.urlbox svg {
	width: 11px;
	height: 11px;
}

.urlbox .big {
	width: 12px;
	height: 12px;
}

.urlbox input {
	flex: 1;
	margin-left: -5px;
	font-size: 9px;
}

.urlbox i {
	width: 1px;
	height: 10px;
	margin: 0 -3px;
	background: #bbb;
}

.navright {
	display: flex;
	align-items: center;
	gap: 11px;
	margin-left: 149px;
}

.navright svg {
	width: 11px;
	height: 11px;
}

.navright .update {
	gap: 6px;
	height: 19px;
	padding: 0 5px;
	border: 1px solid #555;
	border-radius: 3px;
	background: #e8e8e8;
	margin-left: -3px;
}

.navright .update svg {
	width: 9px;
	height: 9px;
}

.bookmarks {
	display: flex;
	align-items: center;
	gap: 10px;
	height: 22px;
	padding: 0 10px 6px 9px;
	white-space: nowrap;
}

.bookmarks a {
	display: flex;
	align-items: center;
	gap: 5px;
}

.bookmarks svg {
	width: 11px;
	height: 11px;
}

.bookmarks button {
	margin-left: auto;
	font-size: 13px;
	line-height: 1;
}

/* app header */
.menubar {
	display: grid;
	grid-template-columns: 1fr auto 1fr;
	align-items: center;
	height: 17px;
	background: #1b2630;
	font-family: Lato, sans-serif;
	font-weight: bold;
}

.menubar nav {
	display: flex;
	gap: 7px;
	height: 100%;
	padding-left: 13px;
}

.menubar nav a {
	padding: 3px 13px;
}

.menubar .current {
	background: #212c3b;
}

.menubar h1 {
	display: flex;
	align-items: center;
	gap: 14px;
	padding-left: 26px;
	font-size: 9px;
	line-height: 15px;
}

.menubar h1 svg {
	width: 8px;
	height: 8px;
	color: #6fa3cc;
	stroke-width: 3;
}

.menuend {
	display: flex;
	justify-content: flex-end;
	padding-right: 13px;
}

.share {
	gap: 5px;
	width: 44px;
	height: 13px;
	border-radius: 7px;
	background: #2a73ad;
}

.share svg {
	width: 7px;
	height: 7px;
}

.pages {
	display: flex;
	align-items: center;
	height: 40px;
	padding-right: 20px;
	border-bottom: 1px solid #1b2531;
}

.brand {
	display: flex;
	align-items: center;
	width: 130px;
	padding-left: 14px;
	font-size: 11px;
	color: #4a80aa;
}

.brand .logo {
	width: 20px;
	height: 20px;
	margin-right: 9px;
}

.brand button {
	margin-left: auto;
	margin-right: 13px;
	color: #6f9cc6;
}

.page {
	display: flex;
	align-items: center;
	gap: 8px;
	width: 165px;
	height: 100%;
	padding-left: 10px;
	border-top: 2px solid transparent;
	border-right: 1px solid #1e2836;
}

.page.open {
	border-top-color: #dc5b62;
}

.thumb {
	width: 40px;
	height: 27px;
	padding: 4px;
	border-radius: 7px;
	font-style: normal;
}

.t1 {
	background: linear-gradient(90deg, #0000 36px, #b9bcbf 36px), linear-gradient(#d5d7d8, #d5d7d8) 12px 3px / 16px 1px no-repeat, linear-gradient(#d5d7d8, #d5d7d8) 18px 9px / 7px 1px no-repeat, linear-gradient(#d5d7d8, #d5d7d8) 11px 21px / 16px 2px no-repeat, #fff;
}

.t4 {
	background: linear-gradient(90deg, #0000 32px, #b4b8bc 32px), linear-gradient(#c8cacc, #dfe1e2) 24px 2px / 9px 7px no-repeat, linear-gradient(#e2e4e5, #e2e4e5) 16px 8px / 12px 13px no-repeat, #fff;
}

.t6 {
	background: linear-gradient(90deg, #0000 35px, #c9ccd0 35px), linear-gradient(#cfcfd0, #cfcfd0) 15px 8px / 5px 8px no-repeat, linear-gradient(#cfcfd0, #cfcfd0) 7px 14px / 8px 6px no-repeat, #fff;
}

.thumb b {
	display: block;
	width: 13px;
	height: 13px;
	border-radius: 50%;
	background: #dc5158;
	line-height: 13px;
	text-align: center;
	font-weight: 600;
}

.page span {
	white-space: nowrap;
}

.page strong {
	display: block;
	font-family: Lato, sans-serif;
	font-size: 10px;
	line-height: 13px;
}

.page small {
	display: block;
	font-family: Lato, sans-serif;
	font-size: 8px;
	line-height: 13px;
	color: #47637f;
}

.addpage {
	width: 27px;
	height: 27px;
	margin-left: 12px;
	border: 1px solid #2b76b0;
	border-radius: 50%;
	color: #3b82bb;
}

.addpage svg {
	stroke-width: 1.4;
}

.avatar {
	width: 27px;
	height: 27px;
	margin-left: auto;
	border-radius: 50%;
	background: #2a73ad;
	font-size: 9px;
	font-weight: 600;
}

main {
	flex: 1;
	min-height: 0;
	display: grid;
	grid-template-columns: 214px 35px minmax(0, 1fr) 496px 25px;
	color: #7ba3cc;
}

/* measurements panel */
.measures {
	display: flex;
	flex-direction: column;
	min-height: 0;
	border-right: 1px solid #1c2632;
}

.mhead {
	display: flex;
	align-items: center;
	gap: 7px;
	height: 34px;
	padding: 0 13px 0 14px;
	border-bottom: 1px solid #1c2632;
}

.mhead svg {
	width: 13px;
	height: 13px;
}

.mhead > svg {
	margin-right: -4px;
}

.mhead svg.sm {
	width: 8px;
	height: 8px;
	stroke-width: 2.6;
}

.mhead button + button:nth-of-type(2) {
	margin-left: -4px;
}

.mhead h2 {
	flex: 1;
	color: #5f93c2;
	font-family: Lato, sans-serif;
	font-size: 9px;
	font-weight: bold;
}

.mhead .off {
	opacity: .15;
}

.plan {
	display: flex;
	align-items: center;
	gap: 7px;
	height: 29px;
	padding: 6px 13px 0;
	font-family: Lato, sans-serif;
	font-size: 9px;
	color: #fff;
	white-space: nowrap;
}

.plan svg {
	color: #6f9cc6;
}

.plan em {
	margin-left: auto;
	padding-right: 3px;
	font-size: 8px;
	font-style: normal;
	color: #6f93b5;
}

#tree {
	flex: 1;
	display: grid;
	grid-auto-rows: 1fr;
	padding-bottom: 32px;
	font-family: Lato, sans-serif;
}

#tree li {
	display: flex;
	align-items: center;
	gap: 4px;
	padding: 0 10px 0 16px;
}

#tree li.l2 {
	padding-left: 29px;
}

#tree li.l3 {
	padding-left: 42px;
}

#tree li.l4 {
	padding-left: 56px;
}

#tree .name {
	flex: 1;
	display: flex;
	align-items: center;
	gap: 4px;
	height: 100%;
	border-bottom: 1px solid #1e2835;
	font-weight: bold;
	color: #e4e9ee;
	white-space: nowrap;
}

#tree .name svg {
	width: 8px;
	height: 8px;
	color: #7ba3cc;
	stroke-width: 2.6;
}

#tree .name svg.hatch {
	width: 14px;
	height: 14px;
	margin-right: 2px;
	color: inherit;
	stroke-width: 2;
}

.count {
	width: 13px;
	height: 13px;
	border-radius: 2px;
	background: #2970a8;
	line-height: 13px;
	text-align: center;
	font-family: "Open Sans", sans-serif;
	font-weight: 600;
	color: #fff;
}

.dot {
	width: 13px;
	height: 13px;
	border: 1px solid #6f93b5;
	border-radius: 50%;
}

.dot.fill {
	border: 0;
}

#tree .eye {
	width: 12px;
	height: 12px;
	color: #7ba3cc;
}

#tree .mini {
	width: 13px;
	height: 7px;
	stroke-width: 3;
}

.user {
	width: 17px;
	height: 17px;
	border-radius: 50%;
	background: #2970a8;
	line-height: 17px;
	text-align: center;
	font-family: "Open Sans", sans-serif;
	font-size: 6px;
	font-weight: bold;
	color: #fff;
}

#tree .goto {
	width: 12px;
	height: 12px;
	color: #374655;
}

.msearch {
	display: flex;
	align-items: center;
	gap: 10px;
	height: 28px;
	padding: 0 13px 0 10px;
	border-top: 1px solid #1c2632;
}

.msearch input {
	flex: 1;
	font-family: Lato, sans-serif;
	font-size: 9px;
}

.msearch input::placeholder,
.fx input::placeholder {
	color: #314151;
	opacity: 1;
}

.msearch button {
	color: #d95860;
}

.msearch button svg {
	width: 8px;
	height: 8px;
	stroke-width: 2.6;
}

/* tool rail */
.rail {
	position: relative;
	display: flex;
	flex-direction: column;
	align-items: center;
	gap: 11px;
	padding-top: 12px;
	padding-bottom: 6px;
	border-left: 2px solid #283444;
	z-index: 1;
}

.rail > button {
	width: 22px;
	height: 22px;
}

.rail > .on {
	border-radius: 50%;
	background: #2a73ad;
	color: #fff;
}

.rail > .dim {
	color: #3b6286;
}

.rail .count {
	margin-top: auto;
	margin-bottom: -5px;
}

.flyout {
	position: absolute;
	top: 17px;
	left: 32px;
	width: 24px;
	height: 77px;
	padding: 15px 10px 15px 1px;
	display: flex;
	flex-direction: column;
	justify-content: space-between;
	border-radius: 0 8px 12px 0;
	background: #1b2734;
}

.flyout svg {
	width: 13px;
	height: 13px;
}

.rail .hand {
	position: absolute;
	top: 85px;
	left: 20px;
	width: 12px;
	height: 15px;
}

/* drawing */
.canvas {
	position: relative;
	min-width: 0;
	overflow: hidden;
	background: #fff;
}

.canvas .drawing {
	width: 100%;
	height: 100%;
	stroke: none;
}

.sheetline {
	stroke: #444;
	stroke-width: 1;
}

.edge {
	fill: none;
	stroke: #6a2a32;
	stroke-width: 1;
}

.ridge {
	fill: none;
	stroke: #9a5259;
	stroke-width: 1.4;
}

.dash {
	fill: none;
	stroke: #94464f;
	stroke-width: 1;
	stroke-dasharray: 5 3;
}

.slopes text,
.dims text {
	font-family: "Liberation Sans", sans-serif;
	font-size: 6px;
	font-style: italic;
	text-anchor: middle;
	fill: #6a3038;
}

.dims text {
	fill: #333;
	stroke: none;
}

.dims {
	stroke: #333;
	stroke-width: .8;
}

.dims .leader {
	fill: none;
	stroke: #888;
}

.area rect {
	fill: #fb6166;
}

.area text {
	font-family: Lato, sans-serif;
	font-size: 8px;
	font-weight: bold;
	fill: #fff;
}

.float {
	position: absolute;
	left: 11px;
	right: 10px;
	display: flex;
	gap: 6px;
	color: #6fa3d8;
}

.float.top {
	top: 10px;
}

.float.bottom {
	bottom: 10px;
	gap: 13px;
}

.round {
	width: 27px;
	height: 27px;
	border-radius: 50%;
	background: #1f2a39;
}

.auto {
	gap: 7px;
	width: 113px;
	height: 27px;
	border: 1px solid #1e5a4c;
	border-radius: 14px;
	background: #1f2a39;
	color: #2fa56b;
	font-family: "Noto Sans", sans-serif;
	font-size: 10px;
}

.pill {
	display: flex;
	align-items: center;
	justify-content: space-between;
	width: 160px;
	height: 27px;
	padding: 0 6px;
	border-radius: 14px;
	background: #1f2a39;
}

.pill.small {
	width: 57px;
	padding: 0 13px;
}

.pill.history {
	width: 60px;
	padding: 0 8px;
}

.green {
	color: #2fa56b;
}

.blue {
	color: #2f75ae;
}

/* report sheet */
.report {
	display: flex;
	flex-direction: column;
	min-height: 0;
	padding-left: 2px;
	background: #212c3b;
	border-left: 1px solid #16202b;
}

.formula {
	display: flex;
	align-items: center;
	gap: 8px;
	height: 34px;
	padding: 0 13px 0 5px;
	background: #1c2733;
	font-size: 9px;
}

.cellname {
	width: 57px;
	height: 27px;
	padding-left: 9px;
	border-radius: 6px;
	background: #202b39;
	font-weight: bold;
	color: #fff;
}

.fx {
	display: flex;
	align-items: center;
	flex: 1;
	gap: 6px;
	height: 27px;
	padding: 0 5px 0 8px;
	border-radius: 8px;
	background: #202b39;
}

.fx input {
	flex: 1;
	font-family: Lato, sans-serif;
}

.insert {
	width: 27px;
	height: 27px;
	border-radius: 50%;
	background: #2a73ad;
	color: #fff;
}

.format {
	display: flex;
	align-items: center;
	gap: 13px;
	height: 27px;
	padding: 0 10px 0 5px;
}

.size {
	display: flex;
	align-items: center;
	gap: 3px;
	width: 46px;
	padding-left: 2px;
	font-family: Lato, sans-serif;
	font-weight: bold;
	font-size: 9px;
	color: #fff;
}

.size select {
	appearance: none;
	width: 26px;
}

.size svg {
	width: 8px;
	height: 8px;
	color: #7ba3cc;
	stroke-width: 2.6;
}

.gridwrap {
	flex: 1;
	display: flex;
	min-height: 0;
}

.gridclip {
	flex: 1;
	min-width: 0;
	overflow: hidden;
}

table {
	width: 100%;
	height: calc(100% + 8px);
	table-layout: fixed;
	border-collapse: collapse;
	font-family: "Open Sans", sans-serif;
	font-size: 9px;
	line-height: 12px;
}

.num {
	width: 31px;
}

.cut {
	width: 18px;
}

th,
td {
	padding: 0;
	border: 1px solid #1f2936;
	font-weight: normal;
	color: #5c7085;
}

thead th {
	height: 18px;
	padding-left: 10px;
	text-align: left;
}

thead th:last-child {
	border-right: 0;
}

tbody th {
	padding-right: 3px;
	text-align: center;
}

th.hot {
	background: #273544;
}

td.selected {
	outline: 1px solid #2d78b0;
	outline-offset: -1px;
	background: linear-gradient(#2d78b0, #2d78b0) right bottom / 4px 4px no-repeat;
}

.vbar {
	width: 3px;
	margin: 18px 3px 0 0;
	background: #1c2733;
}

.vbar i {
	display: block;
	width: 3px;
	height: 27%;
	background: #2f4252;
}

.hbar {
	height: 5px;
	padding-left: 31px;
	background: #1c2733;
}

.hbar i {
	display: block;
	width: 23%;
	height: 3px;
	border-radius: 2px;
	background: #33424f;
}

.sheets {
	display: flex;
	flex-direction: column;
	border-left: 1px solid #1c2632;
}

.sheets button {
	height: 34px;
	padding-right: 4px;
}

.sheets button:last-child {
	height: 28px;
}

.sheets a {
	height: 65px;
	padding-right: 2px;
	border-right: 3px solid #dc5b62;
	writing-mode: vertical-rl;
	line-height: 18px;
	text-align: center;
	font-size: 9px;
	color: #c4565f;
}

footer {
	display: flex;
	align-items: center;
	gap: 19px;
	height: 27px;
	padding: 0 17px 0 13px;
	border-top: 1px solid #1b2531;
	color: #7ba3cc;
}

footer .chat {
	display: flex;
	align-items: center;
	gap: 9px;
	padding-right: 13px;
	border-right: 1px solid #1e2937;
	font-weight: 600;
}

footer span {
	margin-left: -7px;
	font-size: 9px;
	color: #4a6885;
}

footer .hide {
	width: 12px;
	margin-left: 8px;
}

footer .hide svg {
	width: 8px;
	height: 8px;
	stroke-width: 2.6;
}
```

FILE: script.js
```js
// level, arrow, name, count, color, hidden
const rows = [
	[1, 'down', 'Auto Measure', 2, '', false],
	[2, 'down', 'Rooms and Areas', 0, '', false],
	[3, 'right', 'Garage', 0, '#dd57e0', false],
	[3, 'right', 'Cupboard', 0, '#56aee0', false],
	[3, 'right', 'Bathroom', 0, '#83e056', false],
	[3, 'right', 'Undefined', 0, '#e08856', false],
	[3, 'down', 'Bedroom', 0, '#56e0b4', false],
	[3, 'down', 'Living Room', 0, '#56e070', false],
	[2, 'down', 'GEA/GIA/NIA (Fl...', 0, '', false],
	[3, 'down', 'GEA', 0, '#5e61ff', false],
	[3, 'right', 'GIA', 0, '#ff5e5e', false],
	[3, 'right', 'NIA (Flats)', 0, '#7dff5e', false],
	[2, 'down', 'Rooms and Areas', 1, '', true],
	[3, 'down', 'Undefined', 1, '#e08856', true],
	[4, 'hatch', 'Undefined 1', null, '#e08856', true],
	[2, 'down', 'GEA/GIA/NIA (Fl...', 1, '', false],
	[3, 'down', 'GIA', 1, '#ff5e5e', false],
	[4, 'hatch', 'GIA 1', null, '#e85a6a', false]
];

function icon(name, cls, color) {
	const style = color ? ` style="color:${color}"` : '';
	return `<svg class="${cls}"${style}><use href="#${name}"/></svg>`;
}

document.getElementById('tree').innerHTML = rows.map(([level, arrow, name, count, color, hidden]) => {
	let html = `<li class="l${level}"><span class="name">${icon(arrow, arrow, level === 4 ? color : '')}${name}</span>`;
	if (count !== null) {
		html += `<span class="count">${count}</span>`;
		html += color ? `<span class="dot fill" style="background:${color}"></span>` : '<span class="dot"></span>';
	} else if (!hidden) {
		html += icon('hatch', 'mini') + icon('square', 'mini');
	}
	html += icon(hidden ? 'eyeoff' : 'eye', 'eye');
	html += `<span class="user">AS</span>${icon('link', 'goto')}</li>`;
	return html;
}).join('');

const cols = ['A', 'B', 'C', 'D', 'E', 'F', 'G'];
document.querySelector('#grid thead').innerHTML = '<tr><th></th>' +
	cols.map(c => `<th${c === 'A' ? ' class="hot"' : ''}>${c}</th>`).join('') + '</tr>';

let body = '';
for (let r = 1; r <= 28; r++) {
	body += `<tr><th${r === 1 ? ' class="hot"' : ''}>${r}</th>`;
	body += cols.map(c => `<td${r === 1 && c === 'A' ? ' class="selected"' : ''}></td>`).join('');
	body += '</tr>';
}
document.querySelector('#grid tbody').innerHTML = body;
```
